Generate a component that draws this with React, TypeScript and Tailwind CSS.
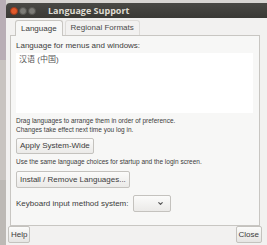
import { ChevronDown } from 'lucide-react';

export default function App() {
  return (
    <div
      className="w-[267px] h-[245px] overflow-hidden flex bg-[#d9d6d3] text-[#3c3c3c]"
      style={{ fontFamily: '"Liberation Sans", "Noto Sans CJK SC", sans-serif' }}
    >
      {/* Desktop strip */}
      <div className="w-[6px] shrink-0 flex flex-col">
        <div className="h-[60px] bg-[#b9aeb6]" />
        <div className="h-[120px] bg-[#c8c4c0]" />
        <div className="flex-1 bg-[#bdb9b5]" />
      </div>

      {/* Window */}
      <div className="w-[270px] shrink-0 mt-[3px] flex flex-col">
        {/* Title bar */}
        <div className="h-[16px] bg-gradient-to-b from-[#4a4945] to-[#3a3935] rounded-tl-[4px] flex items-center pl-[4px]">
          <div className="flex items-center gap-[1px]">
            <span className="w-[8px] h-[8px] rounded-full bg-[#e25a2c] border border-[#9c3a1c]" />
            <span className="w-[8px] h-[8px] rounded-full bg-[#7c7b76] border border-[#55544f]" />
            <span className="w-[8px] h-[8px] rounded-full bg-[#7c7b76] border border-[#55544f]" />
          </div>
          <span
            className="ml-[12px] text-[9px] font-bold text-[#dfdbd2] leading-none"
            style={{ fontFamily: '"Open Sans", sans-serif' }}
          >
            Language Support
          </span>
        </div>

        {/* Body */}
        <div className="flex-1 bg-[#f2f1f0] flex flex-col px-[4px] pb-[2px]">
          {/* Tabs */}
          <div className="flex items-end h-[16px] pl-[5px] gap-[2px] mt-[1px]">
            <div className="h-[16px] px-[5px] flex items-center bg-[#f7f7f6] border border-b-0 border-[#c8c6c2] rounded-t-[3px] text-[8px] relative top-[1px]">
              Language
            </div>
            <div className="h-[15px] px-[5px] flex items-center text-[8px] text-[#4a4a4a] border border-b-0 border-[#dedcd9] rounded-t-[3px]">
              Regional Formats
            </div>
          </div>

          {/* Notebook page */}
          <div className="w-[250px] h-[191px] bg-[#f7f7f6] border border-[#c8c6c2] flex flex-col px-[5px] pt-[5px]">
            <div className="text-[8px] leading-[10px]">Language for menus and windows:</div>
            <div className="mt-[2px] w-[237px] h-[60px] bg-white px-[3px] pt-[1px]">
              <div className="text-[8px] leading-[11px] text-[#555]">汉语 (中国)</div>
            </div>
            <div className="mt-[3px] text-[6.5px] leading-[9px]">
              Drag languages to arrange them in order of preference.
              <br />
              Changes take effect next time you log in.
            </div>
            <div className="mt-[4px] self-start h-[16px] px-[3px] flex items-center border border-[#c4c2be] rounded-[2px] bg-gradient-to-b from-[#fbfbfa] to-[#ebeae8] text-[8px]">
              Apply System-Wide
            </div>
            <div className="mt-[3px] text-[6.5px] leading-[9px]">
              Use the same language choices for startup and the login screen.
            </div>
            <div className="mt-[5px] self-start h-[17px] px-[3px] flex items-center border border-[#c4c2be] rounded-[2px] bg-gradient-to-b from-[#fbfbfa] to-[#ebeae8] text-[8px]">
              Install / Remove Languages...
            </div>
            <div className="mt-[7px] flex items-center gap-[4px]">
              <span className="text-[8px]">Keyboard input method system:</span>
              <div className="w-[38px] h-[17px] border border-[#c4c2be] rounded-[2px] bg-gradient-to-b from-[#fbfbfa] to-[#ebeae8] flex items-center justify-end pr-[6px]">
                <ChevronDown size={7} strokeWidth={4} className="text-[#555]" />
              </div>
            </div>
          </div>

          {/* Bottom buttons */}
          <div className="w-[252px] mt-auto flex justify-between items-end">
            <div className="h-[17px] px-[2px] flex items-center border border-[#c4c2be] rounded-[2px] bg-gradient-to-b from-[#fbfbfa] to-[#e6e5e3] text-[8px] -ml-[2px]">
              Help
            </div>
            <div className="h-[17px] px-[2px] flex items-center border border-[#c4c2be] rounded-[2px] bg-gradient-to-b from-[#fbfbfa] to-[#e6e5e3] text-[8px]">
              Close
            </div>
          </div>
        </div>
      </div>
    </div>
  );
}
